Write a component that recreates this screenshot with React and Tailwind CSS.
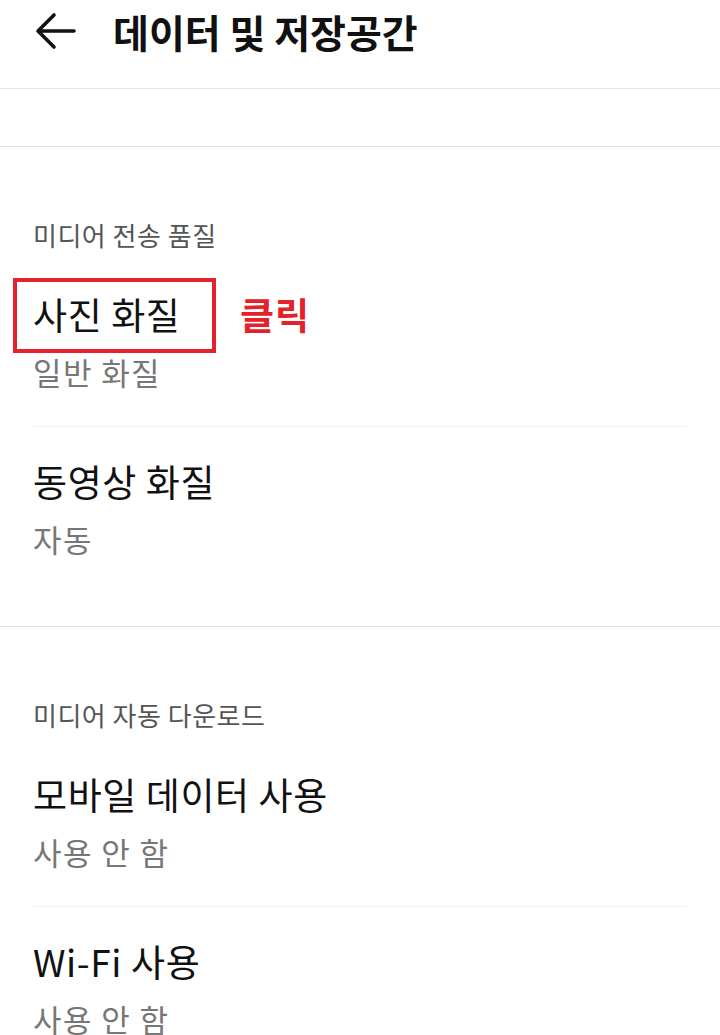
const font = { fontFamily: '"Noto Sans CJK KR", "Noto Sans", sans-serif' };

const Item = ({ title, value, divider, children }) => (
  <div className="relative">
    <div className={`mx-[33px] pt-[30px] pb-[30px] ${divider ? 'border-b border-[#efefef]' : ''}`}>
      <p className="text-[37px] leading-[48px] tracking-[0.6px] text-[#111]">{title}</p>
      <p className="mt-[10px] text-[31px] leading-[48px] tracking-[1.4px] text-[#777]">{value}</p>
    </div>
    {children}
  </div>
);

const Section = ({ label, children }) => (
  <div className="border-b border-[#e2e2e2] pt-[68px] pb-[33px]">
    <p className="px-[33px] text-[26px] leading-[40px] tracking-[0.5px] text-[#555] mb-[5px]">{label}</p>
    {children}
  </div>
);

export default function App() {
  return (
    <div className="w-[720px] h-[1035px] overflow-hidden bg-white" style={font}>
      <div className="h-[89px] border-b border-[#e6e6e6] flex items-center pb-[26px]">
        <div className="w-[113px] flex pl-[35px]">
          <svg width="42" height="38" viewBox="0 0 42 38" fill="none" stroke="#111" strokeWidth="3.6" strokeLinecap="round" strokeLinejoin="round">
            <path d="M3 19 L19 3 M3 19 L19 35 M3 19 L39 19" />
          </svg>
        </div>
        <h1 className="text-[39px] font-bold text-[#111]">데이터 및 저장공간</h1>
      </div>
      <div className="h-[58px] border-b border-[#e2e2e2]" />

      <Section label="미디어 전송 품질">
        <Item title="사진 화질" value="일반 화질" divider>
          <div className="absolute left-[13px] top-[18px] w-[203px] h-[75px] border-[4px] border-[#e3222b]" />
          <span className="absolute left-[240px] top-[30px] text-[37px] leading-[48px] font-bold tracking-[1px] text-[#e3222b]">클릭</span>
        </Item>
        <Item title="동영상 화질" value="자동" />
      </Section>

      <Section label="미디어 자동 다운로드">
        <Item title="모바일 데이터 사용" value="사용 안 함" divider />
        <Item title="Wi-Fi 사용" value="사용 안 함" />
      </Section>
    </div>
  );
}
